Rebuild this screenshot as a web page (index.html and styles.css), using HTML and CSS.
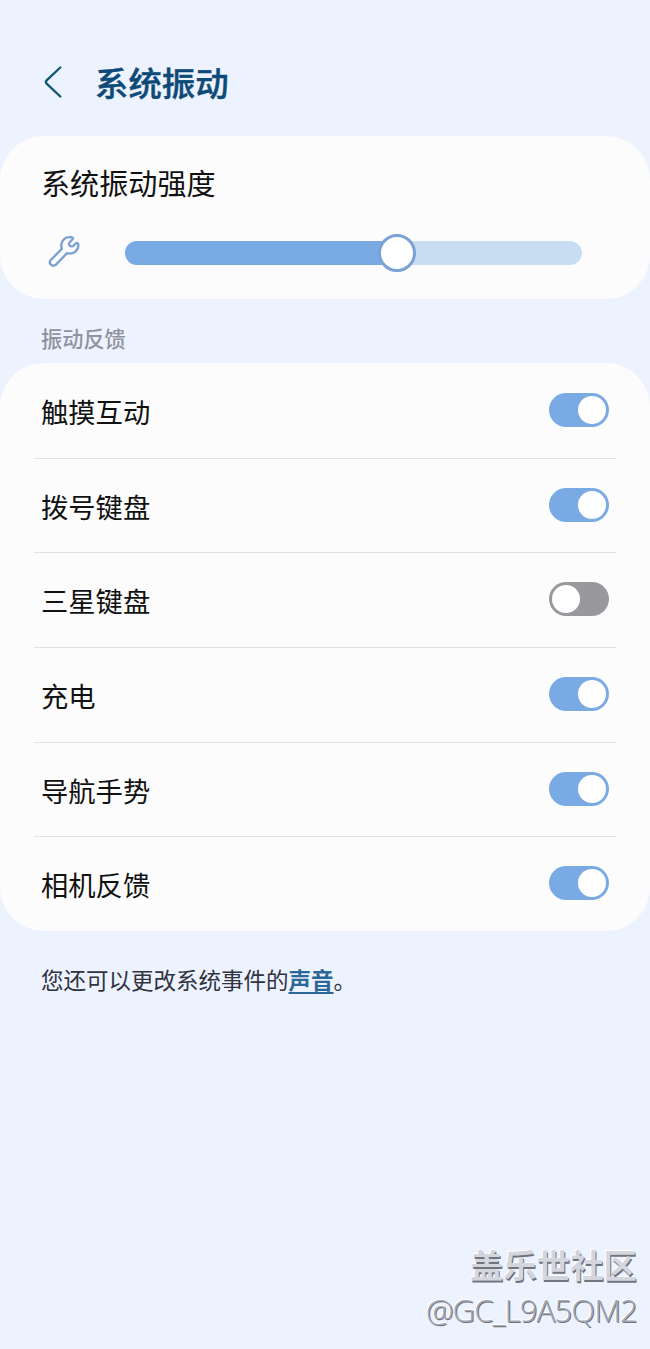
FILE: index.html
```html
<!DOCTYPE html>
<html lang="zh-CN">
<head>
  <meta charset="UTF-8" />
  <meta name="viewport" content="width=device-width, initial-scale=1.0"/>
  <title>系统振动</title>
  <link rel="stylesheet" href="styles.css">
</head>
<body>
  <header class="header">
    <svg class="back-icon" viewBox="0 0 20 34" width="20" height="34">
      <path d="M17.3 2.5 L3.6 15.4 Q2.2 17 3.6 18.6 L17.3 31.5" />
    </svg>
    <h1>系统振动</h1>
  </header>

  <!-- Intensity -->
  <section class="card intensity">
    <h2>系统振动强度</h2>
    <div class="slider-row">
      <svg class="wrench-icon" viewBox="0 0 34 34" width="34" height="34">
        <path d="M13.8 14.8 C11.8 8 16.4 2 23.8 3.3 C25.2 3.8 25.3 4.6 24.4 5.5 L21.4 8.5 C20.3 11.2 22.2 13 25 12.2 L27.9 9.4 C28.9 8.5 29.8 8.9 30.2 10.2 C31 16 25.4 21 19 19.2 L8 30.6 C4.4 33.6 0 29.4 2.8 26 Z" />
      </svg>
      <div class="slider">
        <div class="slider-fill"></div>
        <div class="slider-thumb"></div>
      </div>
    </div>
  </section>

  <h3 class="section-title">振动反馈</h3>

  <!-- Feedback switches -->
  <section class="card list">
    <div class="row"><span>触摸互动</span><div class="switch on"></div></div>
    <div class="row"><span>拨号键盘</span><div class="switch on"></div></div>
    <div class="row"><span>三星键盘</span><div class="switch"></div></div>
    <div class="row"><span>充电</span><div class="switch on"></div></div>
    <div class="row"><span>导航手势</span><div class="switch on"></div></div>
    <div class="row"><span>相机反馈</span><div class="switch on"></div></div>
  </section>

  <p class="note">您还可以更改系统事件的<a href="#">声音</a>。</p>

  <footer class="watermark">
    <div class="community">盖乐世社区</div>
    <div class="user">@GC_L9A5QM2</div>
  </footer>
</body>
</html>
```
FILE: styles.css
```css
:root {
  --bg-color: #edf2ff;
  --card-color: #fcfcfd;
  --title-color: #0d4a77;
  --main-color: #7aaae4;
  --main-dark: #7ba2d4;
}

* {
  box-sizing: border-box;
}

body {
  font-family: "Noto Sans CJK SC", sans-serif;
  background-color: var(--bg-color);
  display: flex;
  flex-direction: column;
  height: 1349px;
  margin: 0;
}

h1,
h2,
h3,
p {
  margin: 0;
}

.header {
  display: flex;
  align-items: center;
  height: 136px;
  padding: 27px 0 0 43px;
}

.back-icon {
  fill: none;
  stroke: #155874;
  stroke-width: 2.4;
  stroke-linecap: round;
  stroke-linejoin: round;
}

.header h1 {
  margin: 0 0 0 32px;
  font-size: 33.4px;
  line-height: 40px;
  font-weight: 500;
  color: var(--title-color);
  -webkit-text-stroke: 0.4px var(--title-color);
}

.card {
  background-color: var(--card-color);
  border-radius: 44px;
}

.intensity {
  height: 163px;
  padding: 27px 68px 0 41px;
}

.intensity h2 {
  font-size: 29.1px;
  line-height: 38px;
  font-weight: 400;
  color: #111;
}

.slider-row {
  display: flex;
  align-items: center;
  gap: 43px;
  height: 38px;
  margin-top: 33px;
  padding-left: 7px;
}

.wrench-icon {
  flex: none;
  margin-top: -4px;
  fill: none;
  stroke: var(--main-dark);
  stroke-width: 2.4;
  stroke-linejoin: round;
}

.slider {
  position: relative;
  flex: 1;
  height: 24px;
  border-radius: 12px;
  background-color: #c9ddf2;
}

.slider-fill {
  width: 272px;
  height: 24px;
  border-radius: 12px 0 0 12px;
  background-color: var(--main-color);
}

.slider-thumb {
  position: absolute;
  top: -7px;
  left: 253px;
  width: 38px;
  height: 38px;
  border: 3px solid var(--main-dark);
  border-radius: 50%;
  background-color: #fff;
}

.section-title {
  height: 64px;
  padding: 24px 41px 0;
  font-size: 21.2px;
  line-height: 30px;
  font-weight: 500;
  color: #8e93a1;
}

.list {
  height: 568px;
  padding: 1px 34px 0;
  display: grid;
  grid-template-rows: repeat(6, 94.7px);
}

.row {
  display: flex;
  align-items: center;
  justify-content: space-between;
  padding: 0 7px 2px;
  border-bottom: 1px solid #e2e2e5;
  font-size: 27.3px;
  line-height: 36px;
  color: #111;
}

.row:last-child {
  border-bottom-color: transparent;
}

.row span {
  padding-top: 2px;
}

.switch {
  display: flex;
  width: 60px;
  height: 34px;
  padding: 3px;
  border-radius: 17px;
  background-color: #98989d;
}

.switch::before {
  content: "";
  width: 28px;
  height: 28px;
  border-radius: 50%;
  background-color: #fff;
}

.switch.on {
  justify-content: flex-end;
  background-color: var(--main-color);
}

.note {
  padding: 32px 41px 0;
  font-size: 22.5px;
  line-height: 32px;
  color: #30343f;
}

.note a {
  color: #2b6797;
  font-weight: 700;
  text-underline-offset: 3px;
  text-decoration-thickness: 2px;
}

.watermark {
  margin-top: auto;
  padding: 0 13px 18px 0;
  text-align: right;
  color: #d3d6dd;
}

.community {
  font-size: 33.4px;
  line-height: 44px;
  margin-bottom: 3px;
  font-weight: 700;
  text-shadow: 1px 2px 0 #70747d, -1px -1px 0 #fff;
}

.user {
  font-family: "Open Sans", sans-serif;
  font-size: 31px;
  line-height: 42px;
  font-weight: 300;
  letter-spacing: -0.8px;
  color: #a4a8b0;
  text-shadow: 1px 1px 0 #70747d, -1px -1px 0 #fff;
}
```
